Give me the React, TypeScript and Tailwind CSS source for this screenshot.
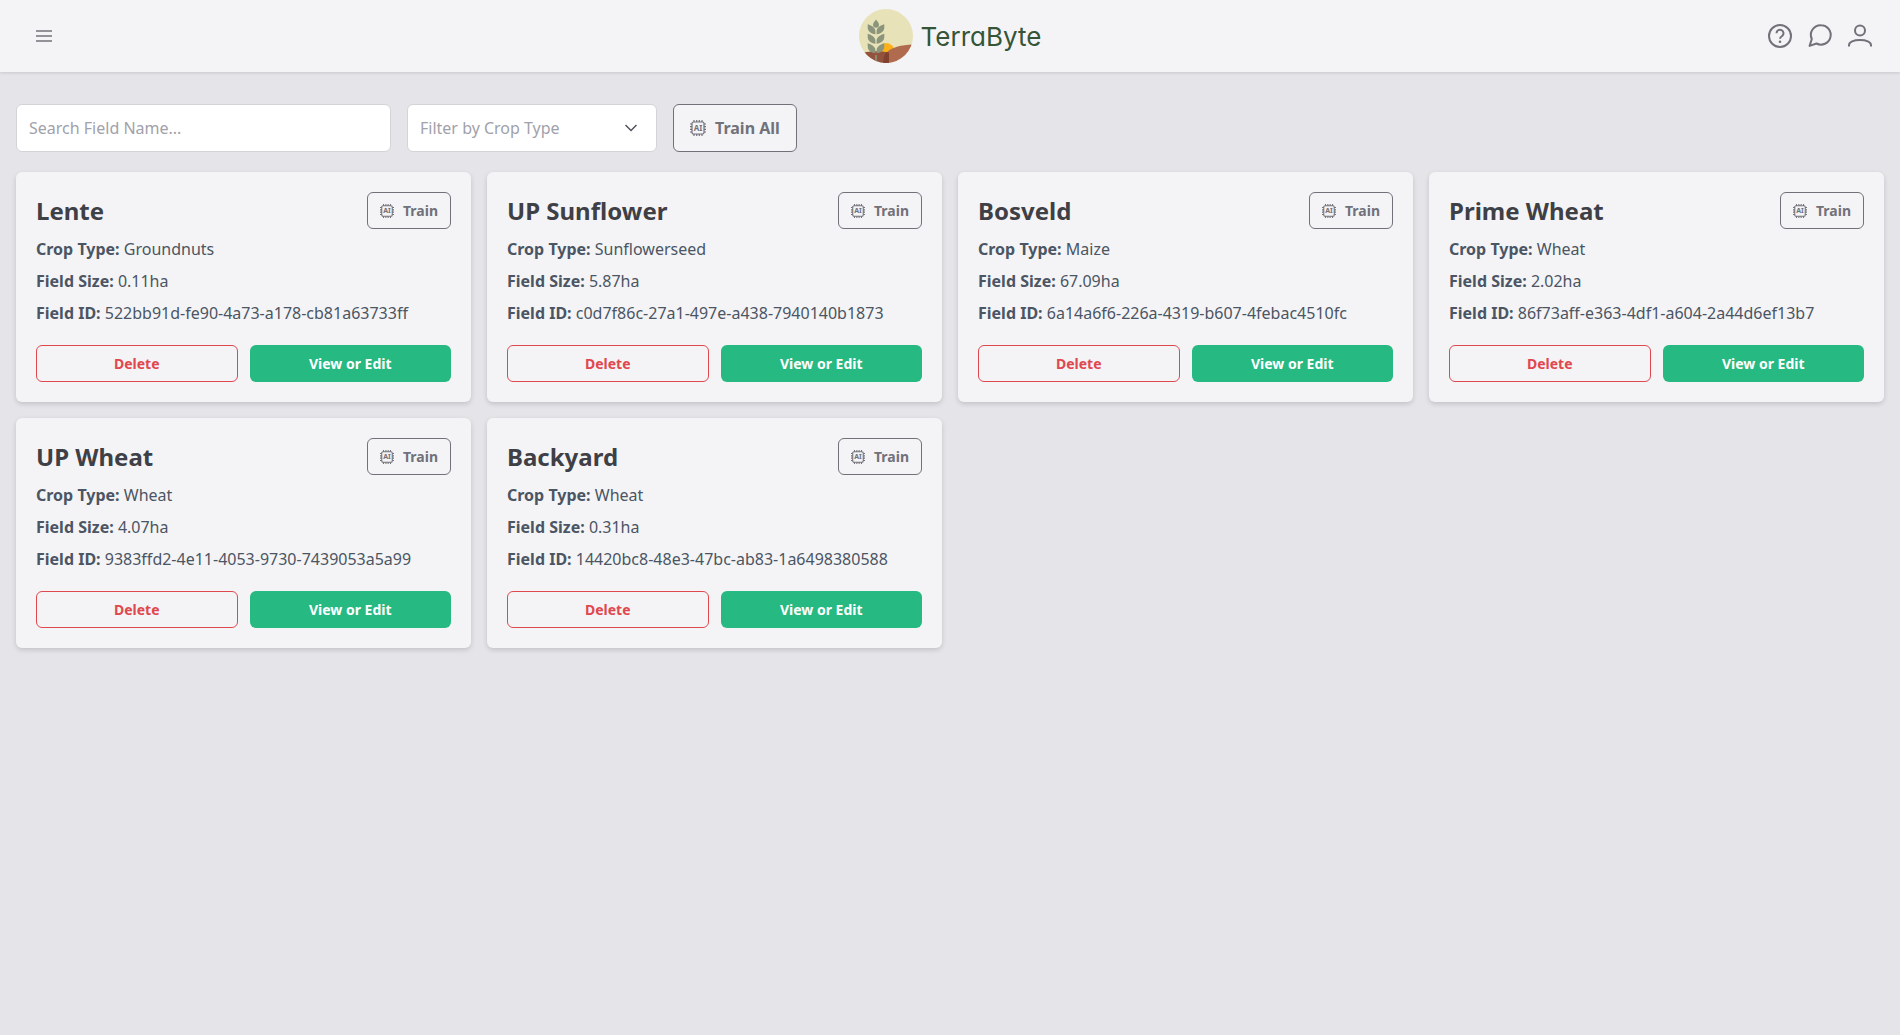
import type { ReactNode } from "react";

type Field = { name: string; crop: string; size: string; id: string };

const fields: Field[] = [
  { name: "Lente", crop: "Groundnuts", size: "0.11ha", id: "522bb91d-fe90-4a73-a178-cb81a63733ff" },
  { name: "UP Sunflower", crop: "Sunflowerseed", size: "5.87ha", id: "c0d7f86c-27a1-497e-a438-7940140b1873" },
  { name: "Bosveld", crop: "Maize", size: "67.09ha", id: "6a14a6f6-226a-4319-b607-4febac4510fc" },
  { name: "Prime Wheat", crop: "Wheat", size: "2.02ha", id: "86f73aff-e363-4df1-a604-2a44d6ef13b7" },
  { name: "UP Wheat", crop: "Wheat", size: "4.07ha", id: "9383ffd2-4e11-4053-9730-7439053a5a99" },
  { name: "Backyard", crop: "Wheat", size: "0.31ha", id: "14420bc8-48e3-47bc-ab83-1a6498380588" },
];

function ChipIcon({ className }: { className: string }) {
  return (
    <svg viewBox="0 0 16 16" className={className} fill="none" stroke="currentColor" aria-hidden="true">
      <rect x="2" y="2" width="12" height="12" rx="1.5" strokeWidth="1.2" />
      <path
        d="M4 0v2M6.700 0v2M9.300 0v2M12 0v2M4 14v2M6.700 14v2M9.300 14v2M12 14v2M0 4h2M0 6.700h2M0 9.300h2M0 12h2M14 4h2M14 6.700h2M14 9.300h2M14 12h2"
        strokeWidth="1.2"
      />
      <text x="8" y="10.800" textAnchor="middle" fontSize="8" fontWeight="700" fill="currentColor" stroke="none">
        AI
      </text>
    </svg>
  );
}

function Logo() {
  return (
    <svg viewBox="0 0 54 54" className="size-[54px]" aria-hidden="true">
      <defs>
        <clipPath id="disc">
          <circle cx="27" cy="27" r="27" />
        </clipPath>
      </defs>
      <g clipPath="url(#disc)">
        <rect width="54" height="54" fill="#e8e2b8" />
        <circle cx="27" cy="43" r="9" fill="#fbb117" />
        <path d="M0 45c8-3.500 20-3.500 30-1.500V54H0Z" fill="#93523c" />
        <path d="M24 54c0-9 5-17.500 30-18.500V54Z" fill="#b06a4e" />
        <path d="M24 54c0-4 .8-7.800 3.400-11 1.200.2 2 .5 2.600.8V54Z" fill="#80422f" />
      </g>
      <g fill="#8b957c">
        <path d="M17 10.500c2 2.500 3 4 3 5.300a3 3 0 0 1-6 0c0-1.300 1-2.800 3-5.300Z" />
        <path d="M16.400 25.200v-3c0-3.800-4-5.700-7.700-7v3c0 4 3 6.300 7.700 7ZM17.600 25.200v-3c0-3.800 4-5.700 7.700-7v3c0 4-3 6.300-7.700 7Z" />
        <path d="M16.400 34.700v-3c0-3.800-4-5.700-7.700-7v3c0 4 3 6.300 7.700 7ZM17.600 34.700v-3c0-3.800 4-5.700 7.700-7v3c0 4-3 6.300-7.700 7Z" />
        <path d="M16.400 44.200v-3c0-3.800-4-5.700-7.700-7v3c0 4 3 6.300 7.700 7ZM17.600 44.200v-3c0-3.800 4-5.700 7.700-7v3c0 4-3 6.300-7.700 7Z" />
        <rect x="16.200" y="46" width="1.600" height="6" />
      </g>
    </svg>
  );
}

function IconButton({ label, children }: { label: string; children: ReactNode }) {
  return (
    <button type="button" aria-label={label} className="flex size-6 items-center justify-center">
      <svg
        viewBox="0 0 24 24"
        className="size-6 overflow-visible"
        fill="none"
        stroke="currentColor"
        strokeWidth="2"
        strokeLinejoin="round"
        aria-hidden="true"
      >
        {children}
      </svg>
    </button>
  );
}

function Header() {
  return (
    <header className="grid h-[72px] grid-cols-[1fr_auto_1fr] items-center bg-[#f4f4f6] px-7 text-[#71717a] shadow-[0_1px_3px_rgba(0,0,0,0.12)]">
      <button type="button" aria-label="Open menu" className="flex size-8 items-center justify-center">
        <svg viewBox="0 0 16 12" className="h-3 w-4" stroke="currentColor" strokeWidth="1.300" aria-hidden="true">
          <path d="M0 1h16M0 6h16M0 11h16" />
        </svg>
      </button>
      <a href="#" className="flex items-center gap-2">
        <Logo />
        <span className="pt-0.5 font-[Inter,sans-serif] text-[26px] leading-8 text-[#355538] [font-feature-settings:'cv11']">
          TerraByte
        </span>
      </a>
      <div className="flex items-center justify-end gap-4">
        <IconButton label="Help">
          <circle cx="12" cy="12" r="11" />
          <path d="M8.500 9.300a3.500 3.500 0 1 1 5.600 2.700c-1.300.9-2.100 1.500-2.100 2.800" />
          <circle cx="12" cy="17.800" r="1.300" fill="currentColor" stroke="none" />
        </IconButton>
        <IconButton label="Messages">
          <path d="M13 1.200a9.700 9.700 0 1 1-4.500 18.300L1.600 21.900 3.800 15A9.700 9.700 0 0 1 13 1.200Z" />
        </IconButton>
        <IconButton label="Profile">
          <circle cx="12" cy="6.500" r="5" />
          <path d="M1 22.500v-1.300c0-3.200 4.700-5.200 11-5.200s11 2 11 5.200v1.300" />
        </IconButton>
      </div>
    </header>
  );
}

function FieldCard({ field }: { field: Field }) {
  const rows = [
    ["Crop Type:", field.crop],
    ["Field Size:", field.size],
    ["Field ID:", field.id],
  ];
  return (
    <article className="flex flex-col rounded-md bg-[#f4f4f6] p-5 shadow-[0_2px_5px_rgba(0,0,0,0.15)]">
      <div className="mb-2 flex items-center justify-between">
        <h2 className="text-2xl font-bold text-[#3f3f46]">{field.name}</h2>
        <button
          type="button"
          className="flex h-[37px] items-center gap-[9px] rounded-md border border-[#71717a] px-3 text-sm font-bold text-[#71717a]"
        >
          <ChipIcon className="size-3.5" />
          Train
        </button>
      </div>
      <div className="flex flex-col gap-2 text-[#4b5563]">
        {rows.map(([label, value]) => (
          <p key={label}>
            <strong className="font-bold">{label}</strong> {value}
          </p>
        ))}
      </div>
      <div className="mt-5 grid grid-cols-2 gap-3 text-sm font-bold">
        <button type="button" className="h-[37px] rounded-md border border-[#e0484f] text-[#e0484f]">
          Delete
        </button>
        <button type="button" className="h-[37px] rounded-md bg-[#26b981] text-white">
          View or Edit
        </button>
      </div>
    </article>
  );
}

export default function App() {
  return (
    <div className="min-h-screen bg-[#e4e4e9] font-['Noto_Sans',sans-serif] text-base">
      <Header />
      <main className="px-4 pt-8">
        <div className="mb-5 flex gap-4">
          <input
            type="text"
            aria-label="Search field name"
            placeholder="Search Field Name..."
            className="h-12 w-[375px] rounded-md border border-[#d4d4d8] bg-white px-3 placeholder:text-[#a1a1aa]"
          />
          <div className="relative">
            <select
              aria-label="Filter by crop type"
              className="h-12 w-[250px] appearance-none rounded-md border border-[#d4d4d8] bg-white px-3 text-[#a1a1aa]"
            >
              <option>Filter by Crop Type</option>
              <option>Groundnuts</option>
              <option>Sunflowerseed</option>
              <option>Maize</option>
              <option>Wheat</option>
            </select>
            <svg
              viewBox="0 0 12 8"
              className="pointer-events-none absolute top-5 right-5 h-2 w-3"
              fill="none"
              stroke="#52525b"
              strokeWidth="1.500"
              aria-hidden="true"
            >
              <path d="m.5 1 5.500 5.500L11.500 1" />
            </svg>
          </div>
          <button
            type="button"
            className="flex h-12 items-center gap-[9px] rounded-md border border-[#71717a] bg-[#f4f4f6] px-4 font-bold text-[#71717a]"
          >
            <ChipIcon className="size-4" />
            Train All
          </button>
        </div>
        <div className="grid grid-cols-4 gap-4">
          {fields.map((field) => (
            <FieldCard key={field.id} field={field} />
          ))}
        </div>
      </main>
    </div>
  );
}
